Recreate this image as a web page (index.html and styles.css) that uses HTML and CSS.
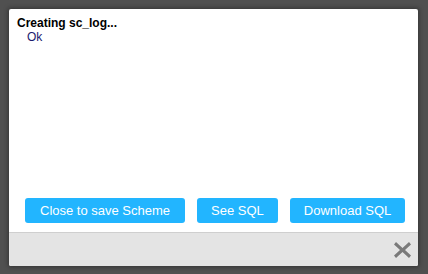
FILE: index.html
```html
<!DOCTYPE html>
<html lang="en">
<head>
    <meta charset="UTF-8">
    <title>Creating scheme</title>
    <link rel="stylesheet" href="styles.css">
</head>
<body>
    <div class="dialog">
        <div class="log">
            <div class="log-title">Creating sc_log...</div>
            <div class="log-line">Ok</div>
        </div>
        <div class="actions">
            <button class="btn btn-wide">Close to save Scheme</button>
            <button class="btn">See SQL</button>
            <button class="btn">Download SQL</button>
        </div>
        <div class="footer">
            <svg class="close" width="19" height="18" viewBox="0 0 19 18">
                <path d="M3 1 L9.5 7 L16 1 L18 3.5 L12 9 L18 14.5 L16 17 L9.5 11 L3 17 L1 14.5 L7 9 L1 3.5 Z" fill="#7a7a7a"/>
            </svg>
        </div>
    </div>
</body>
</html>
```

FILE: styles.css
```css
html, body {
    margin: 0;
    height: 100%;
}
body {
    font-family: "Liberation Sans", Arial, sans-serif;
    background-color: #505050;
    padding: 9px 10px 8px 9px;
    box-sizing: border-box;
}
.dialog {
    background: #fff;
    height: 257px;
    border-radius: 2px;
    box-shadow: 0 0 4px 1px #333;
    display: flex;
    flex-direction: column;
    overflow: hidden;
}
.log {
    flex: 1;
    padding: 7px 8px;
    font-size: 12px;
    line-height: 14px;
}
.log-title {
    font-weight: bold;
    color: #000;
}
.log-line {
    padding-left: 10px;
    color: #1a1a6e;
}
.actions {
    display: flex;
    gap: 12px;
    padding: 0 15px 9px 16px;
}
.btn {
    flex-shrink: 0;
    white-space: nowrap;
    height: 25px;
    padding: 0 14px;
    border: none;
    border-radius: 3px;
    background-color: #22b5ff;
    color: #fff;
    font-family: "Liberation Sans", Arial, sans-serif;
    font-size: 13px;
    cursor: pointer;
}
.btn-wide {
    padding: 0 15px;
}
.footer {
    height: 33px;
    border-top: 1px solid #cfcfcf;
    background-color: #e4e4e4;
    display: flex;
    justify-content: flex-end;
    align-items: center;
    padding-right: 6px;
}
```
